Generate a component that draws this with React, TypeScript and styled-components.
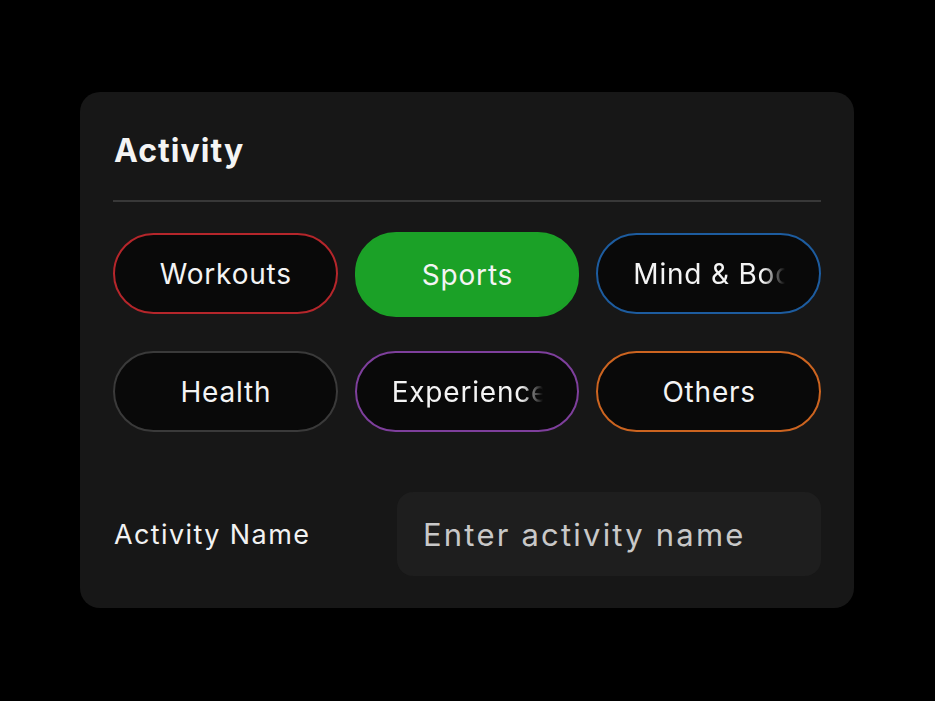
import React from "react";
import styled, { createGlobalStyle } from "styled-components";

const Global = createGlobalStyle`
  html, body { margin: 0; padding: 0; background: #000; }
  body { font-family: Inter, "Noto Sans", sans-serif; -webkit-font-smoothing: antialiased; }
  * { box-sizing: border-box; }
`;

const Page = styled.div`
  width: 935px;
  height: 701px;
  background: #000;
  padding: 92px 81px 0 80px;
`;

const Card = styled.section`
  width: 774px;
  height: 516px;
  background: #171717;
  border-radius: 20px;
  padding: 32px 33px 32px 33px;
  display: flex;
  flex-direction: column;
`;

const Title = styled.h2`
  margin: 0;
  font-size: 32px;
  line-height: 40px;
  font-weight: 700;
  letter-spacing: 1.05px;
  color: #f4f4f4;
  padding: 7px 0 0 1px;
`;

const Divider = styled.hr`
  margin: 29px 0 0;
  border: none;
  height: 2px;
  background: #383838;
`;

const PillGrid = styled.div`
  margin-top: 31px;
  display: grid;
  grid-template-columns: repeat(3, 1fr);
  column-gap: 17px;
  row-gap: 37px;
`;

const Pill = styled.button<{ $border: string; $active?: boolean }>`
  height: 81px;
  border-radius: 41px;
  border: 2px solid ${(p) => (p.$active ? "#1ba127" : p.$border)};
  background: ${(p) => (p.$active ? "#1ba127" : "#090909")};
  color: #f4f4f4;
  font-family: Inter, "Noto Sans", sans-serif;
  font-size: 28px;
  font-weight: 400;
  letter-spacing: 0.8px;
  padding: 0 34px 0 35px;
  display: flex;
  align-items: center;
  justify-content: center;
  overflow: hidden;
  ${(p) => (p.$active ? "height: 85px; margin-top: -1px; margin-bottom: -3px;" : "")}
`;

const PillText = styled.span<{ $fade?: boolean }>`
  display: block;
  width: 100%;
  white-space: nowrap;
  overflow: hidden;
  text-align: ${(p) => (p.$fade ? "left" : "center")};
  ${(p) =>
    p.$fade
      ? `-webkit-mask-image: linear-gradient(to right, #000 calc(100% - 22px), transparent 100%);
         mask-image: linear-gradient(to right, #000 calc(100% - 22px), transparent 100%);`
      : ""}
`;

const FieldRow = styled.div`
  margin-top: 60px;
  display: grid;
  grid-template-columns: 284px 1fr;
  align-items: center;
`;

const FieldLabel = styled.label`
  font-size: 27px;
  font-weight: 400;
  letter-spacing: 1.4px;
  color: #f2f2f2;
  padding-left: 1px;
`;

const Input = styled.input`
  height: 84px;
  border: none;
  border-radius: 16px;
  background: #1e1e1e;
  padding: 0 26px;
  font-family: Inter, "Noto Sans", sans-serif;
  font-size: 31px;
  letter-spacing: 2.2px;
  color: #f0f0f0;
  outline: none;
  width: 100%;
  &::placeholder {
    color: #c8c8c8;
  }
`;

const pills = [
  { label: "Workouts", border: "#b5262b" },
  { label: "Sports", border: "#1ba127", active: true },
  { label: "Mind & Body", border: "#1d5c9f", fade: true },
  { label: "Health", border: "#3a3a3a" },
  { label: "Experience", border: "#7e3f9c", fade: true },
  { label: "Others", border: "#cc6420" },
];

export default function App() {
  return (
    <>
      <Global />
      <Page>
        <Card>
          <Title>Activity</Title>
          <Divider />
          <PillGrid>
            {pills.map((p) => (
              <Pill key={p.label} $border={p.border} $active={p.active}>
                <PillText $fade={p.fade}>{p.label}</PillText>
              </Pill>
            ))}
          </PillGrid>
          <FieldRow>
            <FieldLabel>Activity Name</FieldLabel>
            <Input placeholder="Enter activity name" />
          </FieldRow>
        </Card>
      </Page>
    </>
  );
}
